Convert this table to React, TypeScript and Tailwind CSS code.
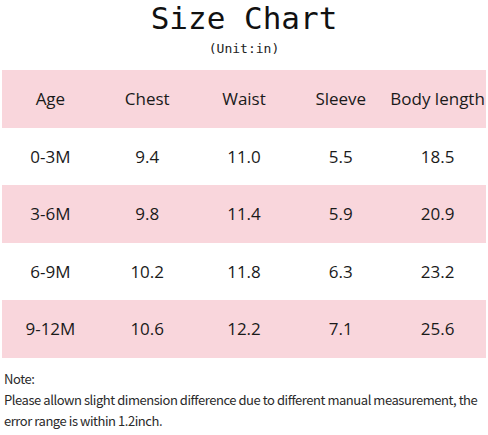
import React from "react";

const header = ["Age", "Chest", "Waist", "Sleeve", "Body length"];
const rows = [
  ["0-3M", "9.4", "11.0", "5.5", "18.5"],
  ["3-6M", "9.8", "11.4", "5.9", "20.9"],
  ["6-9M", "10.2", "11.8", "6.3", "23.2"],
  ["9-12M", "10.6", "12.2", "7.1", "25.6"],
];

function Row({ cells, pink }: { cells: string[]; pink: boolean }) {
  return (
    <div
      className={`grid grid-cols-5 h-[57.5px] items-center text-[17px] text-[#1a1a1a] ${
        pink ? "bg-[#f9d6dc]" : "bg-white"
      }`}
    >
      {cells.map((c, i) => (
        <div key={i} className="text-center">
          {c}
        </div>
      ))}
    </div>
  );
}

export default function App() {
  return (
    <div className="w-[488px] h-[435px] bg-white overflow-hidden">
      <div className="text-center font-['DejaVu_Sans_Mono',monospace] text-[31px] leading-[36px] text-[#111] pt-[0px]">
        Size Chart
      </div>
      <div className="text-center font-['DejaVu_Sans_Mono',monospace] text-[13px] leading-[17px] text-[#222] mt-[4px]">
        (Unit:in)
      </div>
      <div className="mt-[13px] ml-[2px] mr-[2px] font-['Open_Sans','Noto_Sans',sans-serif]">
        <Row cells={header} pink />
        {rows.map((r, i) => (
          <Row key={i} cells={r} pink={i % 2 === 1} />
        ))}
      </div>
      <div className="mt-[10px] px-[4px] font-['Noto_Sans_CJK_JP',sans-serif] text-[13px] leading-[21px] tracking-[-0.45px] text-[#2a2a2a]">
        <div>Note:</div>
        <div>
          Please allown slight dimension difference due to different manual measurement, the error range is within
          1.2inch.
        </div>
      </div>
    </div>
  );
}
